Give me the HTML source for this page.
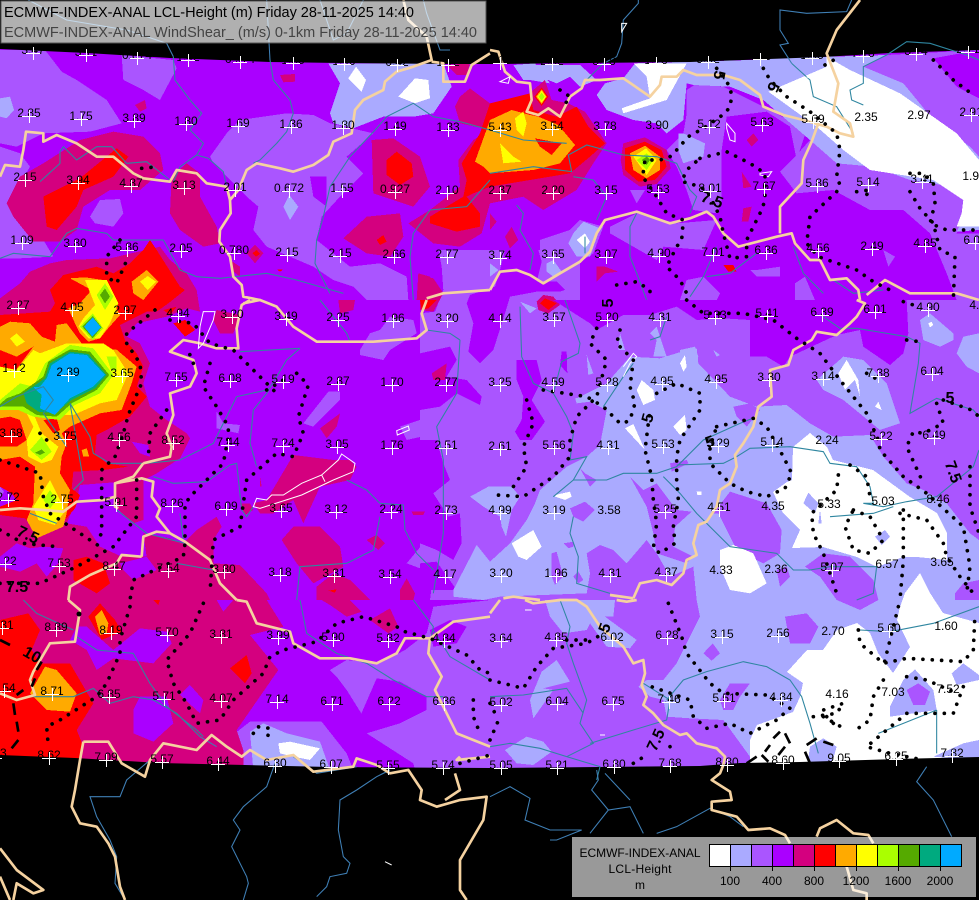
<!DOCTYPE html>
<html><head><meta charset="utf-8"><title>ECMWF LCL-Height</title>
<style>
html,body{margin:0;padding:0;background:#000}
svg{display:block}
.c2{fill:#aa55ff}.c3{fill:#aa00ff}.c1{fill:#aaaaff}.w{fill:#fff}.c4{fill:#d4007f}.r{fill:#f00}.o{fill:#ffaa00}.y{fill:#ff0}.l{fill:#aaff00}.g{fill:#55aa00}.t{fill:#00aa7f}.u{fill:#00aaff}
.f polygon{shape-rendering:crispEdges}
.b{fill:none;stroke:#f5d2a0;stroke-width:8;stroke-linejoin:round}
.v{fill:none;stroke:#2f86a0;stroke-width:3.2}
.k{fill:none;stroke:#3f7fb5;stroke-width:3.2}
.wl{fill:none;stroke:#fff;stroke-width:3}
.d{fill:none;stroke:#000;stroke-width:11;stroke-linecap:round;stroke-dasharray:.1 28}
.m{fill:none;stroke:#000;stroke-width:8;stroke-linecap:butt}
.n text{font:12px "Liberation Sans",sans-serif;fill:#000;text-anchor:middle}
.q text{font:bold 16px "Liberation Sans",sans-serif;fill:#000;text-anchor:middle}
.h{font-family:"Liberation Sans",sans-serif}
</style></head>
<body>
<svg xmlns="http://www.w3.org/2000/svg" width="979" height="900" viewBox="0 0 979 900">
<defs><path id="c" d="M-7 1.5H7M.5-5V8" stroke="#fff" stroke-width="1" fill="none" shape-rendering="crispEdges"/></defs>
<rect width="979" height="900" fill="#000"/>
<rect x="0" y="49" width="979" height="725" class="c3"/>
<g class="f">
<!-- c2 layer -->
<g transform="scale(.33333)">
<polygon class="c2" points="0,150 135,150 185,215 230,240 320,300 365,370 270,395 130,400 50,440 0,430"/>
<polygon class="c2" points="365,165 520,180 530,205 480,300 430,270 370,240"/>
<polygon class="c2" points="0,440 60,460 90,500 55,560 25,620 130,720 160,770 60,775 0,775"/>
<polygon class="c2" points="630,470 680,400 720,360 860,340 940,345 990,370 1120,400 1040,470 1090,520 1020,590 965,650 950,720 1000,760 1050,800 1140,790 1220,830 1225,900 1100,900 1060,860 1000,840 940,800 800,740 760,690 775,620 740,590 700,550 640,490"/>
<polygon class="c3" points="930,530 980,530 980,620 940,590"/>
<polygon class="c1" points="0,295 30,290 42,330 20,355 0,350"/>
<polygon class="c2" points="270,650 300,600 360,597 370,640 340,680 285,670"/>
<polygon class="c1" points="850,620 868,585 895,620 870,660"/>
</g>
<g transform="translate(0,300) scale(.33333)">
<polygon class="c2" points="1080,150 1110,100 1140,90 1170,50 1240,60 1250,100 1170,150 1150,180 1080,165"/>
<polygon class="c2" points="1200,380 1320,340 1310,400 1220,420"/>
<polygon class="c2" points="910,370 985,275 1020,275 1020,300 940,380"/>
<polygon class="c2" points="650,335 670,370 720,375 715,400 650,385"/>
<polygon class="c2" points="1220,790 1270,730 1330,770 1400,700 1470,560 1470,900 1290,900 1300,820"/>
</g>
<g transform="translate(0,600) scale(.33333)">
<polygon class="c2" points="990,210 1040,180 1140,190 1215,150 1280,100 1300,20 1470,0 1470,510 1245,510 1240,490 1100,400 1090,350 1040,270 1010,230"/>
<polygon class="c3" points="1080,350 1130,235 1200,245 1280,290 1280,330 1200,370 1100,400"/>
<polygon class="c3" points="1290,90 1350,60 1400,80 1370,130 1300,140"/>
<polygon class="c2" points="705,400 750,365 965,365 1040,460 1060,510 730,510"/>
<polygon class="c1" points="750,395 790,370 860,400 960,425 990,510 760,510"/>
<polygon class="w" points="835,430 870,425 960,445 930,480 880,470 840,460"/>
</g>
<g transform="translate(490,300) scale(.33333)">
<polygon class="c2" points="0,0 1467,0 1467,1420 0,1420"/>
</g>
<!-- central c2 with c3 pockets -->
<g transform="translate(420,250) scale(.33333)">
<polygon class="c2" points="0,0 480,0 480,150 540,150 540,1020 0,1020"/>
<polygon class="c3" points="0,0 55,0 65,50 70,120 45,185 0,190"/>
<polygon class="c3" points="255,0 355,0 365,35 350,95 410,95 435,120 420,125 350,125 270,140 255,190 220,300 180,340 145,305 160,220 140,160 150,135 225,110 240,60"/>
<polygon class="c3" points="0,310 90,290 110,330 80,380 140,390 185,440 180,465 110,430 60,470 0,480"/>
<polygon class="c3" points="0,570 50,570 70,640 90,690 40,730 85,800 120,790 125,880 100,930 50,900 0,880"/>
<polygon class="c3" points="290,330 350,330 365,390 335,450 375,515 335,570 300,570 285,545 305,510 310,440 290,390"/>
<polygon class="c3" points="0,940 50,935 110,1020 0,1020"/>
<polygon class="c3" points="425,305 440,305 442,370 420,345"/>
<polygon class="c4" points="0,75 40,85 70,130 40,185 0,180"/>
<polygon class="c4" points="350,155 370,135 400,140 420,165 385,190 355,180"/>
<polygon class="r" points="360,160 375,145 410,160 385,180"/>
</g>
<g transform="translate(490,300) scale(.33333)">
<polygon class="c3" points="190,0 1250,0 1255,100 1240,160 1200,195 1120,140 1110,90 1040,105 900,170 880,200 830,170 780,170 780,60 700,55 620,60 560,20 480,45 400,45 320,90 300,70"/>
<!-- c1 SE -->
<polygon class="c1" points="-110,870 -40,735 0,785 60,730 110,660 135,610 150,570 230,500 290,470 330,435 350,330 290,300 260,295 350,250 420,170 510,175 575,155 620,145 625,190 720,290 800,320 890,315 960,370 1030,410 1140,405 1180,470 1250,550 1300,570 1370,610 1440,700 1467,720 1467,1420 780,1420 780,1370 700,1260 600,1255 530,1250 520,1200 480,1190 445,1160 470,1140 520,1140 560,1090 600,1010 630,950 620,900 610,800 540,830 500,760 470,720 410,790 370,750 330,735 290,760 300,820 290,880 30,890 -20,900 -110,890"/>
<polygon class="c2" points="48,710 70,640 110,660 60,730"/>
<polygon class="c1" points="-60,590 -5,560 65,560 90,590 65,630 48,710 35,680 30,650 -20,620"/>
<polygon class="c1" points="90,5 140,25 120,40"/>
<polygon class="c2" points="1395,880 1420,850 1467,840 1467,900 1395,900"/>
<polygon class="c2" points="945,800 1000,760 1080,770 1150,840 1165,900 1110,930 1040,900 990,830"/>
<polygon class="c2" points="885,950 950,940 985,980 960,1030 900,1030"/>
<polygon class="c2" points="640,1060 668,1030 690,1060 665,1082"/>
<polygon class="c2" points="690,1200 720,1150 780,1150 750,1190 730,1230 700,1230"/>
<polygon class="c2" points="540,490 590,480 595,490 545,515"/>
<polygon class="c2" points="730,320 780,310 810,330 770,380 740,350"/>
<polygon class="c2" points="240,625 285,605 315,630 280,665 250,650"/>
<polygon class="c2" points="220,730 250,725 250,740 235,745"/>
<polygon class="c2" points="270,505 285,520 320,540 300,560"/>
<polygon class="c2" points="185,760 200,755 220,830 195,855 185,830"/>
<polygon class="c2" points="250,830 265,815 280,840 265,850"/>
<polygon class="c2" points="420,530 460,570 500,550 560,630 605,635 555,680 550,740 610,770 590,790 500,760 490,700 470,620"/>
<polygon class="c2" points="670,640 720,575 830,610 875,690 870,760 820,790 740,750 685,640"/>
<polygon class="c2" points="860,810 890,800 900,830 870,860"/>
<!-- c1 patches in c2 -->
<polygon class="c1" points="45,1350 110,1310 160,1325 185,1355 130,1395 80,1390"/>
<polygon class="c1" points="120,1200 155,1115 200,1080 240,1145 160,1165 190,1170 130,1255"/>
<polygon class="c1" points="165,900 375,900 370,950 345,950 440,1020 420,1045 350,1040 300,970 290,990 220,1000 180,950"/>
<polygon class="c1" points="1290,60 1320,40 1390,100 1390,120 1350,140 1300,120"/>
<polygon class="c1" points="1420,110 1467,100 1467,220 1430,200 1400,160"/>
<polygon class="c1" points="980,240 1060,170 1120,180 1190,250 1230,370 1170,390 1060,300 1000,270"/>
<polygon class="c1" points="480,100 500,80 530,170 490,170 500,120"/>
<polygon class="c1" points="570,150 615,140 625,170 605,210 570,190"/>
<polygon class="c1" points="670,150 690,165 680,170"/>
<polygon class="c1" points="255,295 320,290 300,305 260,310"/>
<polygon class="c1" points="290,165 310,220 295,225"/>
<polygon class="c1" points="390,100 405,150 385,150"/>
<!-- white -->
<polygon class="w" points="65,730 130,690 155,740 110,780 85,770"/>
<polygon class="w" points="195,585 240,575 245,590 225,600 195,590"/>
<polygon class="w" points="440,270 455,240 490,270 495,300 460,315"/>
<polygon class="w" points="405,385 430,372 465,450"/>
<polygon class="w" points="550,380 585,345 590,390 570,405"/>
<polygon class="w" points="570,190 585,165 590,200 580,215"/>
<polygon class="w" points="620,575 635,575 635,585 622,585"/>
<polygon class="w" points="690,750 730,735 790,760 830,850 780,880 720,870 690,800"/>
<polygon class="w" points="1045,220 1070,180 1105,240 1110,290 1095,240 1065,270"/>
<polygon class="w" points="1155,320 1165,305 1175,330"/>
<polygon class="w" points="1315,70 1325,65 1330,75 1320,82"/>
</g>
<polygon class="w" points="793,447 810,433 827,447 833,460 873,470 910,497 937,513 947,533 947,560 917,557 903,557 877,567 857,557 823,547 792,548 800,530 783,513 773,492 787,482 792,480"/>
<polygon class="w" points="900,607 905,593 917,577 920,573 930,593 943,613 979,623 979,760 933,770 857,770 750,770 750,740 757,725 793,712 800,697 803,683 787,672 807,650 823,650 837,630 857,623 870,633 878,653 893,673 910,647 897,620"/>
<g transform="translate(490,300) scale(.33333)">
<polygon class="c1" points="940,610 955,578 985,610 975,640"/>
<polygon class="c1" points="990,630 995,670 985,670"/>
<polygon class="c1" points="1155,710 1185,690 1200,710 1175,735"/>
</g>
<g transform="translate(490,600) scale(.33333)">
<polygon class="c1" points="1200,320 1240,240 1275,208 1330,270 1340,330 1200,350"/>
<polygon class="c2" points="1250,270 1285,250 1320,275 1305,315 1270,315"/>
<polygon class="c1" points="960,440 1000,415 1040,440 1020,510 950,510"/>
<polygon class="c1" points="1385,220 1420,190 1467,225 1467,240 1400,255"/>
<polygon class="c1" points="1330,470 1420,430 1467,420 1467,480"/>
</g>
<!-- crop2 north-east -->
<g transform="translate(490,0) scale(.33333)">
<polygon class="c2" points="590,340 590,270 620,250 700,260 820,320 950,390 920,480 900,380 830,335 710,350 695,450 695,610 680,640 610,630 590,570 560,500 530,450 580,400"/>
<polygon class="c2" points="870,515 915,470 960,420 1040,490 1150,500 1260,540 1390,560 1440,620 1400,700 1467,700 1467,900 1400,900 1370,820 1320,700 1240,630 1140,630 1030,570 920,580"/>
<polygon class="c2" points="1190,165 1467,150 1467,470 1440,440 1330,360 1240,250 1120,200"/>
<polygon class="c3" points="1330,175 1467,150 1467,295 1400,260"/>
<polygon class="c2" points="360,680 440,640 560,670 680,660 640,750 520,740 500,780 360,700"/>
<polygon class="c2" points="150,720 240,690 270,660 340,680 310,760 250,800 150,770"/>
<polygon class="c2" points="590,840 640,830 690,880 680,900 570,900"/>
<polygon class="c2" points="800,810 870,800 870,830 800,830 780,810"/>
<polygon class="c2" points="915,850 945,830 975,900 915,900"/>
<polygon class="c2" points="1180,750 1215,770 1195,800"/>
<polygon class="c2" points="420,570 465,570 440,610"/>
<polygon class="c1" points="320,285 345,250 400,235 435,190 780,180 860,175 1190,165 1120,200 1240,250 1330,360 1440,440 1467,470 1467,690 1400,695 1440,620 1390,560 1260,540 1150,500 1040,490 960,420 820,300 720,260 610,255 590,250 580,360 530,400 500,370 430,360 350,330"/>
<polygon class="c1" points="70,195 135,190 180,250 120,240 100,240"/>
<polygon class="c1" points="140,195 270,195 320,240 270,260 240,230 200,250 150,230"/>
<polygon class="c1" points="565,400 580,400 645,430 640,470 580,490 565,450"/>
<polygon class="c1" points="250,700 280,665 330,685 300,770 260,770 235,730"/>
<polygon class="c1" points="170,790 190,780 215,815 190,830 170,815"/>
<polygon class="c1" points="0,790 25,810 0,830"/>
<polygon class="w" points="430,190 590,190 530,300 400,340 395,325 480,295 470,230"/>
<polygon class="w" points="835,275 1010,200 1010,170 1080,210 1230,280 1400,400 1467,480 1467,680 1400,680 1415,640 1420,600 1330,540 1140,510 1060,450 980,380"/>
<polygon class="w" points="260,720 285,700 300,725 285,745"/>
<polygon class="c4" points="320,800 345,800 385,815 345,820 320,845"/>
<polygon class="c4" points="45,710 65,680 85,720 60,745"/>
<polygon class="c4" points="0,640 20,665 0,690"/>
<polygon class="c4" points="770,420 790,400 805,420 785,440"/>
<polygon class="c4" points="755,515 785,560 760,565"/>
<polygon class="c4" points="760,625 785,620 775,665 755,665"/>
<polygon class="r" points="700,795 730,795 740,815 715,815"/>
</g>
<!-- crop1 north -->
<g transform="scale(.33333)">
<polygon class="c1" points="985,190 1330,190 1355,260 1300,340 1240,350 1150,350 1060,385 1000,370 990,340 1020,250"/>
<polygon class="w" points="1045,235 1068,200 1098,240 1085,275"/>
<polygon class="w" points="1195,290 1245,235 1285,240 1290,295 1245,310"/>
<polygon class="c4" points="840,225 885,222 885,245 850,247"/>
<polygon class="c4" points="405,315 435,300 440,325 420,335"/>
<polygon class="c4" points="1340,195 1410,190 1400,225 1370,225"/>
<polygon class="c4" points="20,610 60,530 130,490 240,420 340,395 430,410 480,460 490,510 420,570 330,570 250,620 230,690 180,725 100,725 40,650"/>
<polygon class="r" points="130,590 240,535 350,445 385,470 340,530 250,570 230,620 170,690 140,680"/>
<polygon class="c4" points="515,530 560,490 600,520 600,590 650,680 660,730 610,740 540,690 510,640"/>
<polygon class="c4" points="1030,715 1100,650 1200,640 1210,710 1170,770 1100,760"/>
<polygon class="r" points="1130,720 1150,705 1160,725 1140,735"/>
<polygon class="c4" points="740,760 765,735 790,760 765,790"/>
<polygon class="r" points="757,760 770,750 780,762 768,770"/>
<polygon class="c4" points="1255,820 1290,830 1310,900 1250,900"/>
<polygon class="c4" points="690,780 720,800 720,830 695,810"/>
<polygon class="r" points="830,808 850,808 840,815"/>
<polygon class="c4" points="1115,420 1180,415 1260,470 1290,560 1240,620 1120,580"/>
<polygon class="r" points="1160,480 1190,455 1235,490 1240,530 1200,555 1160,525"/>
<polygon class="c4" points="1380,290 1410,265 1470,310 1470,390 1380,370 1365,320"/>
<polygon class="c4" points="1225,670 1290,630 1380,560 1375,480 1420,420 1470,390 1600,270 1635,240 1655,300 1705,310 1755,335 1820,430 1780,490 1730,570 1630,630 1570,590 1470,610 1445,700 1380,740 1300,730"/>
<polygon class="r" points="1385,490 1440,400 1470,310 1550,290 1590,280 1600,330 1670,350 1730,320 1765,380 1815,430 1770,470 1710,520 1590,540 1470,560 1420,580 1400,590 1440,640 1440,680 1370,695 1290,670 1290,650 1390,590 1400,540"/>
<polygon class="o" points="1425,485 1470,360 1535,330 1590,345 1615,350 1675,375 1725,435 1680,490 1600,510 1470,520 1450,500"/>
<polygon class="r" points="1605,415 1685,430 1655,465 1620,440"/>
<polygon class="y" points="1545,355 1570,335 1580,370 1570,410 1550,390"/>
<polygon class="y" points="1500,430 1540,470 1565,485 1510,490"/>
<polygon class="r" points="1603,290 1625,262 1645,290 1625,318"/>
<polygon class="o" points="1608,290 1625,268 1640,290 1625,312"/>
<polygon class="y" points="1612,290 1625,272 1638,290 1625,308"/>
<polygon class="l" points="1616,290 1625,278 1634,290 1625,302"/>
</g>
<!-- second hotspot -->
<g transform="translate(490,0) scale(.33333)">
<polygon class="c4" points="400,430 465,412 530,450 542,505 500,552 450,560 400,525 392,480"/>
<polygon class="r" points="405,445 465,425 515,450 530,500 495,540 445,545 405,510"/>
<polygon class="o" points="420,460 465,437 510,470 510,510 470,535 430,510"/>
<polygon class="y" points="430,470 468,445 500,480 470,525"/>
<polygon class="l" points="440,480 470,460 490,480 470,510"/>
<polygon class="g" points="455,480 470,470 480,480 470,495"/>
</g>
<!-- west -->
<g transform="translate(0,300) scale(.33333)">
<polygon class="c4" points="880,465 920,470 1000,480 1050,480 1070,500 1050,540 960,560 910,670 880,600 820,640 780,640 760,610 800,600"/>
<polygon class="c4" points="845,720 880,680 960,680 1020,740 1030,800 940,850 890,790"/>
<polygon class="c4" points="950,860 1000,820 1050,840 1110,900 950,900"/>
<polygon class="c4" points="1200,870 1220,835 1245,880 1240,900 1200,900"/>
<polygon class="c4" points="1100,720 1130,705 1155,730 1135,750"/>
<polygon class="c4" points="1235,635 1275,635 1270,645 1240,645"/>
<polygon class="c4" points="780,530 785,560 780,560"/>
<polygon class="c4" points="960,385 1020,340 1010,380 980,415"/>
<polygon class="c4" points="1295,220 1340,190 1335,240 1300,240"/>
<polygon class="c4" points="1015,0 1065,0 1060,30 1020,40"/>
<polygon class="r" points="985,872 1010,868 1005,878"/>
<polygon class="r" points="1260,0 1310,0 1285,25 1265,30"/>
<polygon class="c4" points="0,-5 60,-50 90,-85 150,-110 200,-120 330,-125 480,-160 510,-120 560,-80 590,-30 600,35 560,25 500,50 410,70 380,110 420,130 450,190 430,250 450,320 500,360 560,400 570,415 540,475 470,520 430,540 240,555 230,600 200,670 0,650"/>
<polygon class="c3" points="395,425 445,435 450,470 420,460"/>
<polygon class="c4" points="650,30 720,45 700,100 660,100 640,60"/>
<polygon class="c4" points="345,550 430,540 430,660 400,670 345,620"/>
<polygon class="r" points="520,70 555,60 585,90 555,110"/>
<polygon class="r" points="490,30 530,20 510,45"/>
<polygon class="c4" points="0,640 200,670 260,680 300,740 365,770 440,770 430,700 510,715 550,730 590,690 650,650 665,680 640,720 640,790 720,795 800,880 810,900 0,900"/>
<polygon class="c4" points="720,610 750,610 760,630 735,645"/>
<polygon class="c3" points="0,770 50,730 90,745 130,740 190,745 175,790 140,830 110,790 60,815 0,800"/>
<polygon class="c3" points="360,790 440,770 470,810 400,840 370,810"/>
<polygon class="r" points="220,780 260,770 310,790 330,850 290,880 220,840"/>
<polygon class="r" points="0,45 150,35 165,10 150,-30 190,-75 290,-100 340,-80 390,-110 430,-150 450,-180 470,-150 540,-40 555,-30 505,10 470,35 440,35 360,75 375,120 410,160 430,200 410,260 440,290 390,350 320,390 290,405 285,460 320,490 385,500 310,510 220,515 215,565 240,585 225,625 195,660 115,700 75,655 0,645"/>
<polygon class="c3" points="0,560 35,580 50,600 0,620"/>
<polygon class="c2" points="0,560 12,575 0,595"/>
<polygon class="o" points="395,-55 440,-90 475,-55 430,0 400,-20"/>
<polygon class="y" points="420,-55 443,-72 468,-55 443,-30"/>
<polygon class="o" points="0,80 30,65 90,70 125,110 165,125 170,75 200,70 245,130 265,150 300,145 345,145 410,200 395,250 365,330 300,340 210,380 185,400 200,430 185,470 180,520 210,570 200,640 190,680 110,715 80,660 100,610 105,500 75,480 60,470 0,480"/>
<polygon class="r" points="262,128 300,155 330,140 350,120 375,145 330,150 300,165 270,155"/>
<polygon class="o" points="210,-65 255,-68 310,-60 345,-5 345,15 360,45 320,90 300,115 265,125 240,100 225,70 205,25 240,10 275,-30"/>
<polygon class="y" points="255,-60 320,-60 355,10 330,70 300,115 265,115 235,80 250,55 285,15"/>
<polygon class="l" points="290,-15 315,-50 340,-10 315,30"/>
<polygon class="g" points="300,-15 315,-35 330,-10 315,10"/>
<polygon class="l" points="240,80 278,40 310,85 278,120"/>
<polygon class="g" points="247,80 278,48 305,82 278,115"/>
<polygon class="u" points="252,80 278,52 303,82 277,110"/>
<polygon class="r" points="0,150 50,170 100,140 70,180 40,220 0,220"/>
<polygon class="r" points="0,355 30,350 60,360 80,420 50,440 0,440"/>
<polygon class="r" points="130,360 170,355 180,390 160,400"/>
<polygon class="o" points="245,450 260,445 268,470 250,470"/>
<polygon class="y" points="30,115 50,100 75,125 50,140"/>
<polygon class="y" points="0,200 50,210 100,150 120,160 200,130 310,130 340,150 385,220 350,300 300,310 220,345 180,345 125,345 100,340 125,400 175,440 155,480 125,490 85,470 80,420 100,380 60,300 0,320"/>
<polygon class="y" points="100,620 150,540 190,620 190,640 165,675 115,660"/>
<polygon class="l" points="130,600 150,570 170,600 150,625"/>
<polygon class="l" points="90,450 125,410 155,455 125,480"/>
<polygon class="g" points="105,458 125,448 135,458 120,465"/>
<polygon class="l" points="320,170 350,170 350,210 335,215"/>
<polygon class="l" points="0,300 60,250 100,260 135,190 210,135 280,145 340,225 300,280 225,315 180,360 100,350 55,330 0,330"/>
<polygon class="g" points="0,312 20,295 60,280 130,230 145,185 210,148 270,155 328,225 290,270 215,310 170,350 110,345 70,320 0,320"/>
<polygon class="t" points="70,280 135,235 150,190 210,155 265,162 320,225 285,265 215,300 165,340 115,335 80,310"/>
<polygon class="u" points="140,235 155,195 210,160 260,165 315,225 280,260 210,295 165,345 120,325 125,285 100,262 120,260"/>
</g>
<g transform="translate(0,600) scale(.33333)">
<polygon class="c4" points="0,0 800,0 850,80 750,105 835,210 710,390 730,450 730,510 0,510"/>
<polygon class="c3" points="230,80 260,80 340,150 420,85 500,95 515,130 460,190 340,175 290,210 260,150 210,120"/>
<polygon class="c3" points="400,330 420,290 500,290 520,370 460,425 400,400"/>
<polygon class="c3" points="540,285 570,255 610,300 600,340"/>
<polygon class="c3" points="650,0 700,0 670,35"/>
<polygon class="c3" points="0,395 20,460 0,465"/>
<polygon class="c4" points="965,0 1050,0 1085,35 1040,50 990,15"/>
<polygon class="c4" points="1110,60 1170,25 1195,80 1165,100"/>
<polygon class="r" points="0,60 85,40 120,90 95,150 120,190 210,190 280,310 230,390 250,440 225,510 0,510"/>
<polygon class="r" points="460,0 480,0 475,15"/>
<polygon class="r" points="690,205 740,165 755,220 735,250"/>
<polygon class="r" points="265,50 300,10 345,60 365,95 305,120"/>
<polygon class="o" points="285,50 305,30 325,70 320,100 300,105"/>
<polygon class="o" points="90,280 135,200 170,210 230,280 210,335 140,330"/>
</g>
</g>
<!-- masks -->
<polygon fill="#000" points="0,0 979,0 979,50 890,53 823,57 690,62 490,64 450,64 340,63 270,62 170,58 87,53 0,49"/>
<polygon fill="#000" points="0,755 75,758 160,763 245,765 330,767 490,768 600,767 700,766 740,763 800,762 896,759 979,757 979,900 0,900"/>
<!-- rivers -->
<g transform="scale(.33333)">
<path class="k" d="M85 0L200 60 380 90 500 130 520 170"/>
<path class="v" d="M520 170L525 240 570 300 605 340 570 390 610 430 590 465 540 500 520 545M590 465L625 475 670 515 680 560M180 455L190 440 230 480 290 440 335 440 380 490 440 485 510 540M120 545L180 490 180 455"/>
<path class="k" d="M800 0L810 180"/>
<path class="v" d="M810 180L820 240 870 300 880 340 860 395 830 430 780 480 760 490M1470 390L1380 365 1300 350 1240 310 1160 350 1130 385 1050 470 990 560 970 650 950 720 945 790 990 880M0 775L40 760 150 770 200 700 230 685 320 700 340 720 490 720 540 810 590 830 660 835 800 820 890 840 1030 880M1470 540L1400 620 1290 630 1240 700 1230 770 1240 900"/>
<path class="k" d="M1270 0L1280 40 1320 150 1350 150"/>
<path class="k" d="M960 0L1000 120 1040 100 1090 0"/>
</g>
<g transform="translate(490,0) scale(.33333)">
<path class="k" d="M445 0V10L400 60 395 130 380 170 340 190"/>
<path class="v" d="M340 190L290 240"/>
<path class="k" d="M1085 0L1070 35 950 40 870 30 870 90 895 130 870 135 905 190"/>
<path class="v" d="M905 190L960 240 970 290 1040 320 1090 400"/>
<path class="v" d="M1190 165L1120 200 1120 250 1080 270 1085 300 1120 315M1190 165L1250 125 1320 130 1430 165 1467 180"/>
<path class="v" d="M0 520L130 500 245 515 235 465 290 435 400 465 500 470 560 490 600 570 620 590 600 640M0 390L100 420 230 430M250 530L310 540 350 590 320 660M80 615L100 640 90 690 130 760 120 810M440 640L420 680 420 770 440 820 470 900M680 740L640 830 600 890M800 760L720 820 650 830M910 740L940 820 1000 880M1030 840L1090 880 1180 870M285 710V760"/>
</g>
<g transform="translate(0,300) scale(.33333)">
<path class="v" d="M960 0L1040 100 1050 125M1380 120L1350 100 1280 90M1380 120L1370 280 1310 380 1330 480 1330 700 1300 880M900 145L860 180 800 280 760 330 750 430 770 500M900 145L720 155M800 270L710 290 680 350 640 430 540 480 440 490 330 490 280 460 270 410 210 310 250 540 220 570M460 530L520 550 620 545 690 495 710 490 725 630 740 650 760 620M1040 540L1100 570 1140 610 1210 615 1215 690 1250 760 1300 810M1140 650L1120 750 1040 790 900 800 890 900M540 640L550 720M0 320L50 290 130 260 160 300 130 340 200 440M350 630L440 700 555 730M530 790L640 810M90 640L170 670"/>
</g>
<g transform="translate(0,600) scale(.33333)">
<path class="v" d="M70 0L110 40 220 90M230 110L290 150 400 160 450 250 500 320 590 390 610 410M90 290L220 290 280 265 330 310 400 290 460 300 530 340 600 410M900 0L920 100 1010 160 1100 190 1180 240 1280 290 1330 290"/>
<path class="k" d="M600 410L650 440M450 480L380 540 360 590 270 590 290 650 330 720 350 770 345 850 375 900M825 490L800 560 730 620 700 660 720 690 695 740 740 830 745 850 730 900M1170 510L1130 530 1070 570 1020 600 1015 690 1030 770 1050 790 1040 820 990 830 980 860 950 890"/>
<path class="k" d="M880 470L950 520 1070 500"/>
<path class="v" d="M1240 0L1300 80 1285 160M1300 90L1350 170 1470 240"/>
</g>
<g transform="translate(490,300) scale(.33333)">
<path class="v" d="M225 0L270 130 265 160 215 185 190 280 230 350 250 400 240 480 290 470 250 540 190 590M90 20L95 170 130 250 160 265M265 160"/>
<path class="v" d="M560 495L700 490 740 470 780 445 900 440 1000 455 1020 490 1100 500 1140 560 1150 610 1120 610 1180 620 1250 605 1340 590 1450 500 1467 450"/>
<path class="v" d="M250 540L350 540 400 520 500 520 560 500 640 420 750 370 800 350M520 530L570 580 620 640 680 700 720 740 860 760 910 810 960 810 1020 800 1160 800 1150 880 1100 900M250 650L240 700 265 770 260 850 360 880M1020 650L1150 640 1210 620M130 250L190 280M480 120L510 110 530 50M340 320L400 230 430 190"/>
<path class="v" d="M1100 85L1250 110 1290 130 1285 190 1260 340 1340 295 1450 330 1467 350M1000 50L1050 85 1100 85"/>
</g>
<g transform="translate(490,600) scale(.33333)">
<path class="v" d="M0 440L60 430 150 445 230 470 330 500 320 540M210 0L240 80 230 130 250 190 290 300 270 370 310 430 230 470M530 300L580 240 650 215 760 185 830 200 900 240 935 290 960 370 985 460M0 290L100 285 230 265 280 340M460 250L540 300 530 360 430 390 300 430M1340 330L1240 370 1165 400M1340 330V460M1110 90L1200 95 1330 70 1467 20"/>
<path class="k" d="M320 510L325 540 305 570 355 630 420 620 460 700M345 520L420 600M0 590L60 560 120 595 105 660 180 690 240 690 275 690 200 720 180 720M300 700L355 630M500 700L560 680 660 625 720 650 760 680M1310 500L1280 545 1330 600 1385 710"/>
</g>
<g transform="translate(0,600) scale(.33333)">
<path class="b" d="M205 0L240 30 225 125 150 130 100 215 90 240 105 285 50 300 0 280M250 425L325 425 365 490 435 530 450 480 490 430 590 450 635 405 680 440 725 470 750 450 800 480 880 465 940 515 1060 500 1070 475 1130 495 1170 520 1225 510 1265 570 1260 600 1310 620 1380 600 1460 590 1450 660 1380 780 1380 870 1400 900M250 425L240 480 225 570 215 620 240 670 290 680 325 730 345 770 360 860 375 900M0 745L50 810 130 870 100 880 50 850 40 900M0 830L30 900M1470 50L1360 65 1290 115 1215 115 1190 160 1130 190 1050 175 960 175 880 130 870 95 770 70 740 5 710 0M1290 115L1285 160 1325 230 1305 270 1340 340 1370 400 1470 440M1380 470L1370 480 1470 470M1365 520L1380 570 1335 600"/>
</g>
<g transform="scale(.33333)">
<path class="b" d="M1210 0L1225 60 1280 110 1295 180 1240 200 1190 215 1155 245 1150 270 1090 300 1065 330 1055 400 1000 425 985 465 940 495 880 515 840 505 770 490 740 510 715 570 690 600 692 640 660 690 658 725 690 770 700 830 725 855 730 890 780 900M1295 185L1330 190 1330 245 1395 245 1415 195 1470 160M1280 895L1330 880 1470 870"/>
<path class="b" d="M0 530L15 495 60 500 70 450 78 395 130 400 130 425 170 405 230 430 290 470 340 470 400 520 430 535 510 545 530 510 590 520 620 550 680 560 690 600"/>
</g>
<g transform="translate(0,300) scale(.33333)">
<path class="b" d="M730 10L780 0 830 20 880 80 950 125 1120 125 1250 115 1280 90 1265 40 1280 0M710 900L660 850 630 780 555 725 510 700 470 650 480 625 455 590 460 545 425 535 345 550 345 620 355 625M0 630L60 625 130 630 190 635 230 605 310 600 345 590M430 490L510 470 515 440 500 400 520 345 510 280 570 260 590 220 580 180 510 155 550 120 600 130 650 145 715 145 710 85 725 15 750 0M430 490L400 530 345 550M425 770L430 710 470 695 510 700M425 770L365 765 350 790 270 825 210 860 205 900"/>
</g>
<g transform="translate(490,0) scale(.33333)">
<path class="b" d="M0 870L30 815 80 810 120 825 160 850 210 820 270 785 300 755 320 700 345 660 440 635 540 670 600 655 650 635 670 650 700 700 745 740 860 710 905 700 915 730 960 780 990 780 1020 840 1070 835 1105 870 1110 900M0 150L25 155 45 215 80 245 120 250 125 300 110 335 145 345 175 325 210 350 240 290 275 265 285 240 330 240 400 235 480 290 510 255 515 230 560 230 580 210 620 225 700 225 750 240 810 285 820 320 880 345 940 360 1010 380 1050 400 1090 410 1080 370 1030 335 1045 250 1010 160 1040 90 1110 0M985 370L965 425 940 480 935 550 870 620 870 700M1130 885L1185 840 1260 880 1340 880 1400 880 1467 900"/>
</g>
<g transform="translate(490,300) scale(.33333)">
<path class="b" d="M1100 0L1125 10 1100 50 1080 70 1040 105 980 95 965 120 910 150 895 195 840 210 845 290 805 320 790 380 760 430 735 465 740 500 720 550 690 570 680 620 650 665 625 675 610 730 620 765 590 780 580 820 545 855 500 840 450 850 430 895M40 895L70 890 150 900M360 885L430 895"/>
</g>
<g transform="translate(490,600) scale(.33333)">
<path class="b" d="M0 40L30 0M105 0L130 10 210 0 260 0 290 20 330 80 400 140 430 190 460 180 465 220 455 255 470 290 460 315 490 340 520 375 570 405 590 400 620 430 680 445 705 470 700 495 690 520 665 540 720 575 725 600 665 605 665 630 740 650 775 690 840 685 885 705 900 730M980 710L990 685 1040 660 1090 700 1135 705 1150 730M1070 800L1090 870 1130 880 1130 900"/>
<path class="b" d="M380 0L410 5 440 0"/>
</g>
<!-- white outlines -->
<g transform="translate(0,300) scale(.33333)">
<path class="wl" d="M1025 462L1065 490 1060 515 1000 540 905 585 780 625 760 620 770 595 800 600 815 585 850 585 905 550 965 525 1015 480ZM965 525L975 545"/>
<path class="wl" d="M610 35L645 35 640 60 610 130 595 145 600 80Z"/>
<path class="wl" d="M1190 392L1225 378 1228 390 1192 405Z"/>
</g>
<g transform="translate(490,0) scale(.33333)">
<path class="wl" d="M710 370L735 400 735 425 720 420 710 385ZM810 520L845 515 835 530 810 525ZM395 70L410 70 395 95ZM30 245L60 230 55 250ZM950 230L970 240"/>
</g>
<g transform="translate(490,300) scale(.33333)"><path class="wl" d="M400 200L430 160 440 170 420 190 400 230"/></g>
<g transform="translate(0,600) scale(.33333)"><path class="wl" d="M1155 785L1175 795"/></g>
<g transform="translate(490,600) scale(.33333)"><path class="wl" d="M105 30L125 30M330 405L345 405"/></g>
<!-- dotted -->
<g transform="translate(490,0) scale(.33333)">
<path class="d" d="M680 205L720 260 725 290 720 320 705 340 640 385 595 410 560 450 540 470 510 480 465 480 458 530 500 590 530 640 580 660 575 720 560 740 530 800 570 840 590 880"/>
<path class="d" d="M820 205L840 240 890 290 960 335 1040 400 1050 450 1040 530 1050 555 1040 575 960 650 950 730 985 770 1100 810 1150 845 1200 870"/>
<path class="d" d="M630 475L710 455 780 490 825 520 825 600 815 630 780 700 770 720 770 770 720 775 700 700 690 650 650 570 600 550 575 545 590 510 630 475"/>
<path class="d" d="M1330 180L1390 240 1450 285"/>
<path class="d" d="M1260 520L1300 520 1330 550 1335 610 1320 670 1370 690 1460 690M1260 575L1290 625 1330 670 1350 750 1395 770 1390 900"/>
<path class="d" d="M380 855L440 845 480 870 480 900M210 270L240 290 220 320M1005 195L1040 175M1100 575L1140 570 1115 605"/>
</g>
<g transform="scale(.33333)">
<path class="d" d="M425 505L475 500M360 720L320 770 320 830 350 850 385 770"/>
</g>
<g transform="translate(0,300) scale(.33333)">
<path class="d" d="M465 30L380 100 380 130 420 190 425 250 405 295 385 345 370 400 345 470 305 510 305 700 295 715"/>
<path class="d" d="M510 60L580 70 630 130 700 150 780 230 840 290M580 190L560 140"/>
<path class="d" d="M630 190L610 260 650 320 685 380 685 410 670 490 580 580 555 610 555 730 550 770 400 840 390 900"/>
<path class="d" d="M890 220L925 255 895 350 910 400 880 470 830 460 740 540 730 610 720 680 640 720 630 880M800 270L850 240"/>
<path class="d" d="M410 540L410 650 340 740 230 800 120 850 0 850M0 480L120 520 130 590 150 640 210 680 300 740M0 690L70 730 170 740M120 400L150 430M500 330L450 400 445 470"/>
</g>
<g transform="translate(490,300) scale(.33333)">
<path class="d" d="M320 85L300 130 350 180 320 290 260 350 240 420 240 470 190 530 100 590 20 585M160 270L290 290 340 320 400 380M110 300L130 370 100 440 110 500 70 560"/>
<path class="d" d="M390 90L380 130 430 180 420 260 435 310 420 360 400 370"/>
<path class="d" d="M500 280L560 250 630 280 630 330 570 420 560 470 560 540 565 600 550 680 555 730 510 760 490 745 500 670 490 600 485 530 465 450 480 330"/>
<path class="d" d="M680 380L790 355 830 380 880 470 905 520 885 565 830 590 770 575 720 550 660 490 660 440Z"/>
<path class="d" d="M590 0L640 40 760 40 850 60 920 115 990 160 1050 240 1130 340 1165 420 1170 450 1240 530 1310 580 1420 680 1440 800 1430 880"/>
<path class="d" d="M1340 310L1360 370 1300 400 1270 395 1250 440 1300 550M1360 300L1445 330 1467 350M1250 120L1290 125M1240 5L1270 15M1130 220L1165 240"/>
<path class="d" d="M1045 525L1040 570 965 640 970 700 1000 760 1040 880M1080 495L1130 530 1140 590M1090 630L1140 650 1180 720 1140 760 1090 750 1065 680ZM1230 640L1310 660 1360 730 1370 770 1410 830 1450 880M1240 630V780L1230 900M1440 500V620L1467 700"/>
</g>
<g transform="translate(0,600) scale(.33333)">
<path class="d" d="M390 20L360 120 360 160 320 250 290 290 180 360 140 380 145 440"/>
<path class="d" d="M610 10L570 100 500 180 520 250 560 310 590 370 660 360 700 300 790 220 810 170 850 150 950 125 1010 70 1090 50 1190 80 1215 95 1290 115 1400 165 1440 210 1470 220"/>
<path class="d" d="M1420 300V350L1440 400M760 400L770 380 810 385 800 420M1380 490L1470 465"/>
</g>
<g transform="translate(490,600) scale(.33333)">
<path class="d" d="M230 120L310 120M0 240L100 265 140 200 190 145 290 130 340 100"/>
<path class="d" d="M535 10L575 110 590 160 660 250 700 280 830 285 900 325 860 360 780 400 720 370 650 385 610 350 600 300 470 255"/>
<path class="d" d="M1105 90L1110 130 1180 190 1250 175 1420 185 1450 150 1455 40M1225 20L1205 100 1180 200M1180 240L1150 290 1140 360 1090 395M1250 230L1310 240 1400 280M1420 260L1390 340 1250 340 1130 440 1200 460 1300 480M430 490L470 465M540 440L545 460M0 420L30 350M0 310L20 350M970 350L1040 340 1060 310 1000 330M1000 350L1070 390M1010 350L1030 370"/>
</g>
<!-- bold dashes -->
<g transform="translate(0,600) scale(.33333)">
<path class="m" d="M0 120L30 135M110 210L125 185M95 260L105 235M50 285L70 270M40 310L45 345M50 365L55 395M35 445L55 420"/>
</g>
<g transform="translate(490,600) scale(.33333)">
<path class="m" d="M770 490L800 470M815 465L835 485M825 455L840 435M865 465L885 440M850 415L870 395M885 400L900 430M950 435L980 415M1000 425L1030 435M945 455L960 490"/>
</g>
<circle cx="79" cy="614" r="2.5" fill="#000"/>
<!-- contour labels -->
<g class="q">
<text transform="translate(719,75) rotate(100)" y="5">5</text>
<text transform="translate(773,87) rotate(115)" y="5">5</text>
<text transform="translate(712,200) rotate(20)" y="5">7.5</text>
<text transform="translate(608,303) rotate(-90)" y="5">5</text>
<text transform="translate(648,418) rotate(-75)" y="5">5</text>
<text transform="translate(710,442) rotate(-20)" y="5">5</text>
<text transform="translate(950,398)" y="5">5</text>
<text transform="translate(953,472) rotate(70)" y="5">7.5</text>
<text transform="translate(28,535) rotate(25)" y="5">7.5</text>
<text transform="translate(17,587)" y="5">7.5</text>
<text transform="translate(32,655) rotate(30)" y="5">10</text>
<text transform="translate(605,628) rotate(-70)" y="5">5</text>
<text transform="translate(656,740) rotate(-65)" y="5">7.5</text>
</g>
<!-- stations -->
<g class="n">
<text x="33" y="54">3.47</text><use href="#c" x="33" y="52"/>
<text x="86" y="56">3.11</text><use href="#c" x="86" y="54"/>
<text x="137" y="59">0.874</text><use href="#c" x="137" y="57"/>
<text x="188" y="61">1.42</text><use href="#c" x="188" y="59"/>
<text x="240" y="63">0.974</text><use href="#c" x="240" y="61"/>
<text x="293" y="64">1.35</text><use href="#c" x="293" y="62"/>
<text x="344" y="65">1.40</text><use href="#c" x="344" y="63"/>
<text x="397" y="66">0.42</text><use href="#c" x="397" y="64"/>
<text x="448" y="66">1.12</text><use href="#c" x="448" y="64"/>
<text x="500" y="64">2.15</text><use href="#c" x="500" y="62"/>
<text x="552" y="65">2.52</text><use href="#c" x="552" y="63"/>
<text x="604" y="65">3.78</text><use href="#c" x="604" y="63"/>
<text x="656" y="64">1.78</text><use href="#c" x="656" y="62"/>
<text x="708" y="63">5.52</text><use href="#c" x="708" y="61"/>
<text x="760" y="60">4.89</text><use href="#c" x="760" y="58"/>
<text x="812" y="59">1.65</text><use href="#c" x="812" y="57"/>
<text x="863" y="57">7.18</text><use href="#c" x="863" y="55"/>
<text x="916" y="55">3.14</text><use href="#c" x="916" y="53"/>
<text x="968" y="53">2.71</text><use href="#c" x="968" y="51"/>

<text x="29" y="117">2.85</text><use href="#c" x="29" y="115"/>
<text x="81" y="120">1.75</text><use href="#c" x="81" y="118"/>
<text x="134" y="122">3.89</text><use href="#c" x="134" y="120"/>
<text x="186" y="125">1.80</text><use href="#c" x="186" y="123"/>
<text x="238" y="127">1.69</text><use href="#c" x="238" y="125"/>
<text x="291" y="128">1.36</text><use href="#c" x="291" y="126"/>
<text x="343" y="129">1.80</text><use href="#c" x="343" y="127"/>
<text x="395" y="130">1.49</text><use href="#c" x="395" y="128"/>
<text x="448" y="131">1.33</text><use href="#c" x="448" y="129"/>
<text x="500" y="131">5.43</text><use href="#c" x="500" y="129"/>
<text x="552" y="130">3.54</text><use href="#c" x="552" y="128"/>
<text x="605" y="130">3.78</text><use href="#c" x="605" y="128"/>
<text x="657" y="129">3.90</text>
<text x="709" y="128">5.12</text><use href="#c" x="709" y="126"/>
<text x="762" y="126">5.63</text><use href="#c" x="762" y="124"/>
<text x="813" y="123">5.69</text><use href="#c" x="813" y="121"/>
<text x="866" y="121">2.35</text>
<text x="919" y="119">2.97</text>
<text x="971" y="116">2.91</text><use href="#c" x="971" y="114"/>

<text x="25" y="181">2.15</text><use href="#c" x="25" y="179"/>
<text x="78" y="184">3.94</text><use href="#c" x="78" y="182"/>
<text x="131" y="187">4.87</text><use href="#c" x="131" y="185"/>
<text x="184" y="189">3.13</text><use href="#c" x="184" y="187"/>
<text x="235" y="191">2.01</text><use href="#c" x="235" y="189"/>
<text x="289" y="192">0.672</text><use href="#c" x="289" y="190"/>
<text x="342" y="192">1.55</text><use href="#c" x="342" y="190"/>
<text x="395" y="193">0.927</text><use href="#c" x="395" y="191"/>
<text x="447" y="194">2.10</text><use href="#c" x="447" y="192"/>
<text x="500" y="194">2.37</text><use href="#c" x="500" y="192"/>
<text x="553" y="194">2.20</text><use href="#c" x="553" y="192"/>
<text x="606" y="194">3.15</text><use href="#c" x="606" y="192"/>
<text x="658" y="193">5.53</text><use href="#c" x="658" y="191"/>
<text x="710" y="192">8.01</text><use href="#c" x="710" y="190"/>
<text x="764" y="190">7.67</text><use href="#c" x="764" y="188"/>
<text x="817" y="187">5.86</text><use href="#c" x="817" y="185"/>
<text x="868" y="186">5.14</text><use href="#c" x="868" y="184"/>
<text x="922" y="183">3.41</text><use href="#c" x="922" y="181"/>
<text x="974" y="180">1.95</text>

<text x="22" y="244">1.09</text><use href="#c" x="22" y="242"/>
<text x="75" y="247">3.80</text><use href="#c" x="75" y="245"/>
<text x="127" y="251">5.86</text><use href="#c" x="127" y="249"/>
<text x="181" y="252">2.05</text><use href="#c" x="181" y="250"/>
<text x="234" y="254">0.780</text><use href="#c" x="234" y="252"/>
<text x="287" y="256">2.15</text><use href="#c" x="287" y="254"/>
<text x="340" y="257">2.15</text><use href="#c" x="340" y="255"/>
<text x="394" y="258">2.66</text><use href="#c" x="394" y="256"/>
<text x="447" y="258">2.77</text><use href="#c" x="447" y="256"/>
<text x="500" y="259">3.74</text><use href="#c" x="500" y="257"/>
<text x="553" y="258">3.65</text><use href="#c" x="553" y="256"/>
<text x="606" y="258">3.07</text><use href="#c" x="606" y="256"/>
<text x="659" y="257">4.90</text><use href="#c" x="659" y="255"/>
<text x="713" y="256">7.01</text><use href="#c" x="713" y="254"/>
<text x="766" y="254">6.36</text><use href="#c" x="766" y="252"/>
<text x="818" y="252">4.56</text><use href="#c" x="818" y="250"/>
<text x="872" y="250">2.49</text><use href="#c" x="872" y="248"/>
<text x="925" y="247">4.85</text><use href="#c" x="925" y="245"/>
<text x="975" y="244">6.04</text><use href="#c" x="975" y="242"/>

<text x="18" y="309">2.27</text><use href="#c" x="18" y="307"/>
<text x="72" y="311">4.05</text><use href="#c" x="72" y="309"/>
<text x="125" y="314">2.97</text><use href="#c" x="125" y="312"/>
<text x="178" y="317">4.94</text><use href="#c" x="178" y="315"/>
<text x="232" y="318">3.20</text><use href="#c" x="232" y="316"/>
<text x="286" y="320">3.49</text><use href="#c" x="286" y="318"/>
<text x="338" y="321">2.25</text><use href="#c" x="338" y="319"/>
<text x="393" y="322">1.96</text><use href="#c" x="393" y="320"/>
<text x="447" y="322">3.20</text><use href="#c" x="447" y="320"/>
<text x="500" y="322">4.14</text><use href="#c" x="500" y="320"/>
<text x="554" y="321">3.57</text><use href="#c" x="554" y="319"/>
<text x="607" y="321">5.20</text><use href="#c" x="607" y="319"/>
<text x="660" y="321">4.31</text><use href="#c" x="660" y="319"/>
<text x="715" y="319">5.33</text><use href="#c" x="715" y="317"/>
<text x="767" y="317">5.41</text><use href="#c" x="767" y="315"/>
<text x="822" y="316">6.39</text><use href="#c" x="822" y="314"/>
<text x="875" y="313">6.01</text><use href="#c" x="875" y="311"/>
<text x="928" y="311">4.90</text><use href="#c" x="928" y="309"/>
<text x="981" y="309">4.85</text>

<text x="14" y="372">1.12</text><use href="#c" x="14" y="370"/>
<text x="68" y="376">2.39</text><use href="#c" x="68" y="374"/>
<text x="122" y="377">3.65</text><use href="#c" x="122" y="375"/>
<text x="176" y="381">7.55</text><use href="#c" x="176" y="379"/>
<text x="230" y="382">6.08</text><use href="#c" x="230" y="380"/>
<text x="283" y="383">5.19</text><use href="#c" x="283" y="381"/>
<text x="338" y="385">2.87</text><use href="#c" x="338" y="383"/>
<text x="392" y="386">1.70</text><use href="#c" x="392" y="384"/>
<text x="446" y="386">2.77</text><use href="#c" x="446" y="384"/>
<text x="500" y="386">3.25</text><use href="#c" x="500" y="384"/>
<text x="553" y="386">4.59</text><use href="#c" x="553" y="384"/>
<text x="607" y="386">5.28</text><use href="#c" x="607" y="384"/>
<text x="662" y="385">4.95</text><use href="#c" x="662" y="383"/>
<text x="716" y="383">4.95</text><use href="#c" x="716" y="381"/>
<text x="769" y="381">3.30</text><use href="#c" x="769" y="379"/>
<text x="823" y="380">3.14</text><use href="#c" x="823" y="378"/>
<text x="878" y="377">7.38</text><use href="#c" x="878" y="375"/>
<text x="932" y="375">6.04</text><use href="#c" x="932" y="373"/>

<text x="11" y="437">3.68</text><use href="#c" x="11" y="435"/>
<text x="65" y="440">3.75</text><use href="#c" x="65" y="438"/>
<text x="119" y="441">4.56</text><use href="#c" x="119" y="439"/>
<text x="173" y="444">8.52</text><use href="#c" x="173" y="442"/>
<text x="228" y="446">7.44</text><use href="#c" x="228" y="444"/>
<text x="283" y="447">7.24</text><use href="#c" x="283" y="445"/>
<text x="337" y="448">3.05</text><use href="#c" x="337" y="446"/>
<text x="392" y="449">1.76</text><use href="#c" x="392" y="447"/>
<text x="446" y="449">2.51</text><use href="#c" x="446" y="447"/>
<text x="500" y="450">2.61</text><use href="#c" x="500" y="448"/>
<text x="554" y="449">5.56</text><use href="#c" x="554" y="447"/>
<text x="608" y="449">4.31</text><use href="#c" x="608" y="447"/>
<text x="663" y="448">5.53</text><use href="#c" x="663" y="446"/>
<text x="718" y="447">5.29</text><use href="#c" x="718" y="445"/>
<text x="772" y="446">5.14</text><use href="#c" x="772" y="444"/>
<text x="827" y="444">2.24</text>
<text x="881" y="440">5.22</text><use href="#c" x="881" y="438"/>
<text x="934" y="439">6.49</text><use href="#c" x="934" y="437"/>

<text x="8" y="501">2.72</text><use href="#c" x="8" y="499"/>
<text x="62" y="503">2.75</text><use href="#c" x="62" y="501"/>
<text x="116" y="506">5.91</text><use href="#c" x="116" y="504"/>
<text x="172" y="507">8.26</text><use href="#c" x="172" y="505"/>
<text x="226" y="510">6.09</text><use href="#c" x="226" y="508"/>
<text x="281" y="512">3.65</text><use href="#c" x="281" y="510"/>
<text x="336" y="513">3.12</text><use href="#c" x="336" y="511"/>
<text x="391" y="513">2.24</text><use href="#c" x="391" y="511"/>
<text x="446" y="514">2.73</text><use href="#c" x="446" y="512"/>
<text x="500" y="514">4.99</text><use href="#c" x="500" y="512"/>
<text x="554" y="514">3.19</text><use href="#c" x="554" y="512"/>
<text x="609" y="514">3.58</text>
<text x="665" y="513">5.25</text><use href="#c" x="665" y="511"/>
<text x="719" y="511">4.51</text><use href="#c" x="719" y="509"/>
<text x="773" y="510">4.35</text>
<text x="829" y="508">5.33</text>
<text x="883" y="505">5.03</text>
<text x="938" y="503">8.46</text>

<text x="5" y="565">2.22</text><use href="#c" x="5" y="563"/>
<text x="59" y="567">7.53</text><use href="#c" x="59" y="565"/>
<text x="114" y="570">8.47</text><use href="#c" x="114" y="568"/>
<text x="168" y="572">7.54</text><use href="#c" x="168" y="570"/>
<text x="224" y="573">3.80</text><use href="#c" x="224" y="571"/>
<text x="280" y="576">3.18</text><use href="#c" x="280" y="574"/>
<text x="334" y="577">3.31</text><use href="#c" x="334" y="575"/>
<text x="390" y="578">3.54</text><use href="#c" x="390" y="576"/>
<text x="445" y="578">4.17</text><use href="#c" x="445" y="576"/>
<text x="501" y="577">3.20</text><use href="#c" x="501" y="575"/>
<text x="556" y="577">1.96</text><use href="#c" x="556" y="575"/>
<text x="610" y="577">4.31</text><use href="#c" x="610" y="575"/>
<text x="666" y="576">4.37</text><use href="#c" x="666" y="574"/>
<text x="721" y="574">4.33</text>
<text x="776" y="573">2.36</text>
<text x="832" y="571">5.07</text><use href="#c" x="832" y="569"/>
<text x="887" y="568">6.57</text>
<text x="942" y="566">3.65</text>

<text x="2" y="629">8.31</text><use href="#c" x="2" y="627"/>
<text x="56" y="631">8.89</text><use href="#c" x="56" y="629"/>
<text x="111" y="634">8.19</text><use href="#c" x="111" y="632"/>
<text x="167" y="636">5.70</text><use href="#c" x="167" y="634"/>
<text x="221" y="638">3.81</text><use href="#c" x="221" y="636"/>
<text x="278" y="639">3.99</text><use href="#c" x="278" y="637"/>
<text x="333" y="641">5.90</text><use href="#c" x="333" y="639"/>
<text x="388" y="642">5.82</text><use href="#c" x="388" y="640"/>
<text x="444" y="642">4.84</text><use href="#c" x="444" y="640"/>
<text x="501" y="642">3.64</text><use href="#c" x="501" y="640"/>
<text x="556" y="641">4.85</text><use href="#c" x="556" y="639"/>
<text x="612" y="641">6.02</text><use href="#c" x="612" y="639"/>
<text x="667" y="639">6.28</text><use href="#c" x="667" y="637"/>
<text x="722" y="638">3.15</text><use href="#c" x="722" y="636"/>
<text x="778" y="637">2.56</text><use href="#c" x="778" y="635"/>
<text x="833" y="635">2.70</text>
<text x="889" y="632">5.60</text><use href="#c" x="889" y="630"/>
<text x="946" y="630">1.60</text>

<text x="4" y="692">8.54</text><use href="#c" x="4" y="690"/>
<text x="52" y="695">8.71</text><use href="#c" x="52" y="693"/>
<text x="109" y="698">6.85</text><use href="#c" x="109" y="696"/>
<text x="164" y="700">5.71</text><use href="#c" x="164" y="698"/>
<text x="221" y="702">4.07</text><use href="#c" x="221" y="700"/>
<text x="277" y="703">7.14</text><use href="#c" x="277" y="701"/>
<text x="332" y="705">6.71</text><use href="#c" x="332" y="703"/>
<text x="389" y="705">6.22</text><use href="#c" x="389" y="703"/>
<text x="444" y="705">6.36</text><use href="#c" x="444" y="703"/>
<text x="501" y="706">5.02</text><use href="#c" x="501" y="704"/>
<text x="557" y="705">6.04</text><use href="#c" x="557" y="703"/>
<text x="613" y="705">6.75</text><use href="#c" x="613" y="703"/>
<text x="669" y="703">7.46</text><use href="#c" x="669" y="701"/>
<text x="724" y="702">5.51</text><use href="#c" x="724" y="700"/>
<text x="781" y="701">4.84</text><use href="#c" x="781" y="699"/>
<text x="837" y="698">4.16</text>
<text x="893" y="696">7.03</text>
<text x="948" y="693">7.52</text>

<text x="-5" y="757">8.43</text><use href="#c" x="-5" y="757"/>
<text x="49" y="759">8.62</text><use href="#c" x="49" y="757"/>
<text x="106" y="761">7.09</text><use href="#c" x="106" y="759"/>
<text x="162" y="763">5.57</text><use href="#c" x="162" y="761"/>
<text x="218" y="765">6.44</text><use href="#c" x="218" y="763"/>
<text x="275" y="767">6.30</text><use href="#c" x="275" y="765"/>
<text x="331" y="768">6.07</text><use href="#c" x="331" y="766"/>
<text x="388" y="769">5.55</text><use href="#c" x="388" y="767"/>
<text x="443" y="769">5.74</text><use href="#c" x="443" y="767"/>
<text x="501" y="769">5.05</text><use href="#c" x="501" y="767"/>
<text x="557" y="769">5.21</text><use href="#c" x="557" y="767"/>
<text x="614" y="768">6.80</text><use href="#c" x="614" y="766"/>
<text x="670" y="767">7.68</text><use href="#c" x="670" y="765"/>
<text x="727" y="766">8.80</text><use href="#c" x="727" y="764"/>
<text x="783" y="764">8.60</text><use href="#c" x="783" y="762"/>
<text x="839" y="762">9.05</text><use href="#c" x="839" y="760"/>
<text x="896" y="760">6.25</text><use href="#c" x="896" y="758"/>
<text x="952" y="757">7.82</text><use href="#c" x="952" y="755"/>
</g>
<!-- header -->
<rect x="1" y="1" width="485" height="42" fill="#fff" fill-opacity=".69" stroke="#555" stroke-width="1"/>
<text class="h" x="4" y="17" font-size="14.5" fill="#000" textLength="410" lengthAdjust="spacing">ECMWF-INDEX-ANAL LCL-Height (m) Friday 28-11-2025 14:40</text>
<text class="h" x="4" y="37" font-size="14.5" fill="#444" textLength="473" lengthAdjust="spacing">ECMWF-INDEX-ANAL WindShear_ (m/s) 0-1km Friday 28-11-2025 14:40</text>
<!-- legend -->
<rect x="572" y="837" width="404" height="60" fill="#fff" fill-opacity=".6"/>
<g class="h" font-size="12" fill="#000" text-anchor="middle">
<text x="640" y="857" textLength="121" lengthAdjust="spacing">ECMWF-INDEX-ANAL</text>
<text x="640" y="873" textLength="63" lengthAdjust="spacing">LCL-Height</text>
<text x="640" y="889">m</text>
<text x="730" y="885">100</text><text x="772" y="885">400</text><text x="814" y="885">800</text><text x="856" y="885">1200</text><text x="898" y="885">1600</text><text x="940" y="885">2000</text>
</g>
<g shape-rendering="crispEdges">
<rect x="709.5" y="844.5" width="21" height="22" fill="#fff"/>
<rect x="730.5" y="844.5" width="21" height="22" fill="#aaaaff"/>
<rect x="751.5" y="844.5" width="21" height="22" fill="#aa55ff"/>
<rect x="772.5" y="844.5" width="21" height="22" fill="#aa00ff"/>
<rect x="793.5" y="844.5" width="21" height="22" fill="#d4007f"/>
<rect x="814.5" y="844.5" width="21" height="22" fill="#f00"/>
<rect x="835.5" y="844.5" width="21" height="22" fill="#ffaa00"/>
<rect x="856.5" y="844.5" width="21" height="22" fill="#ff0"/>
<rect x="877.5" y="844.5" width="21" height="22" fill="#aaff00"/>
<rect x="898.5" y="844.5" width="21" height="22" fill="#55aa00"/>
<rect x="919.5" y="844.5" width="21" height="22" fill="#00aa7f"/>
<rect x="940.5" y="844.5" width="21" height="22" fill="#00aaff"/>
<path d="M709.5 844.5H961.5V866.5H709.5ZM730.5 844.5V871M751.5 844.5V866.5M772.5 844.5V871M793.5 844.5V866.5M814.5 844.5V871M835.5 844.5V866.5M856.5 844.5V871M877.5 844.5V866.5M898.5 844.5V871M919.5 844.5V866.5M940.5 844.5V871" fill="none" stroke="#000" stroke-width="1"/>
</g>
</svg>
</body></html>
